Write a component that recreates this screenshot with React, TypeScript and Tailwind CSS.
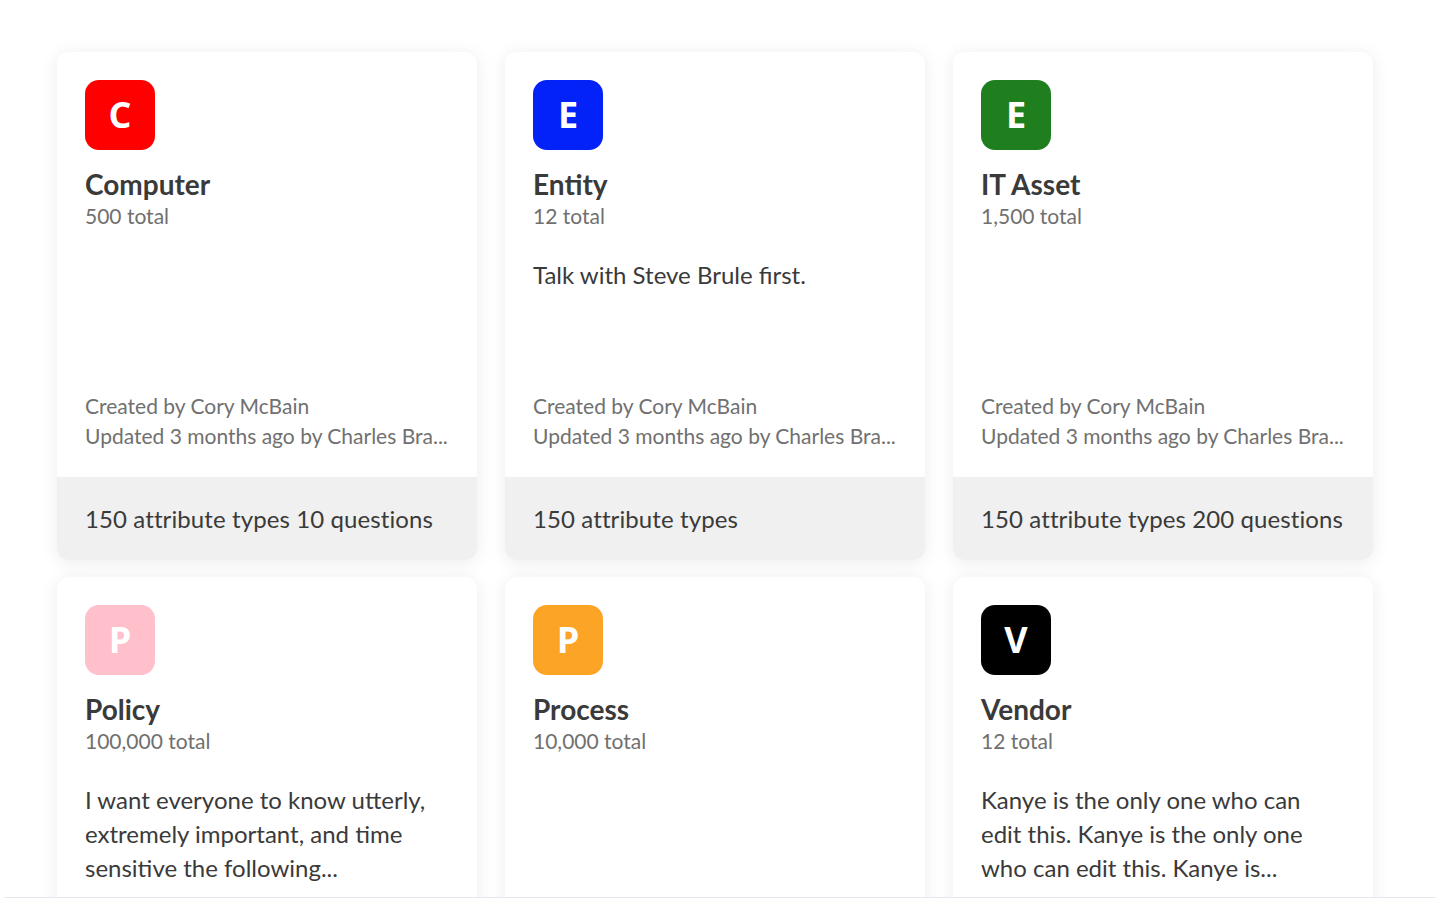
import React from "react";

type Card = {
  letter: string;
  color: string;
  title: string;
  total: string;
  desc?: string;
  footer: string;
};

const cards: Card[] = [
  { letter: "C", color: "bg-[#ff0000]", title: "Computer", total: "500 total", footer: "150 attribute types 10 questions" },
  { letter: "E", color: "bg-[#0322f8]", title: "Entity", total: "12 total", desc: "Talk with Steve Brule first.", footer: "150 attribute types" },
  { letter: "E", color: "bg-[#1f7f1f]", title: "IT Asset", total: "1,500 total", footer: "150 attribute types 200 questions" },
  { letter: "P", color: "bg-[#ffc0cb]", title: "Policy", total: "100,000 total", desc: "I want everyone to know utterly, extremely important, and time sensitive the following...", footer: "150 attribute types" },
  { letter: "P", color: "bg-[#fca426]", title: "Process", total: "10,000 total", footer: "150 attribute types" },
  { letter: "V", color: "bg-[#000000]", title: "Vendor", total: "12 total", desc: "Kanye is the only one who can edit this. Kanye is the only one who can edit this. Kanye is...", footer: "150 attribute types" },
];

function CardView({ c }: { c: Card }) {
  return (
    <div className="rounded-[12px] bg-white shadow-[0_2px_18px_rgba(0,0,0,0.08)] overflow-hidden flex flex-col">
      <div className="min-h-[425px] flex flex-col px-[28px] pt-[28px] pb-[26px]">
        <div
          className={`w-[70px] h-[70px] rounded-[14px] ${c.color} flex items-center justify-center text-white text-[36px] font-bold leading-none`}
          style={{ fontFamily: "'Open Sans', sans-serif" }}
        >
          {c.letter}
        </div>
        <div className="mt-[16px] text-[28px] leading-[36px] font-bold text-[#3a3a3a]">{c.title}</div>
        <div className="text-[21px] leading-[28px] text-[#707070]">{c.total}</div>
        <div className="flex-1">
          {c.desc && (
            <div className="mt-[28px] text-[24px] leading-[34px] text-[#3a3a3a]">{c.desc}</div>
          )}
        </div>
        <div className="text-[21px] leading-[30px] text-[#707070] whitespace-nowrap">
          <div>Created by Cory McBain</div>
          <div>Updated 3 months ago by Charles Bra...</div>
        </div>
      </div>
      <div className="bg-[#f0f0f0] h-[83px] flex items-center px-[28px] text-[24px] tracking-[0.1px] text-[#3a3a3a]">
        {c.footer}
      </div>
    </div>
  );
}

export default function App() {
  return (
    <div className="h-[900px] overflow-hidden bg-white" style={{ fontFamily: "Lato, 'Open Sans', sans-serif" }}>
      <div className="relative h-[898px] overflow-hidden border-b border-[#e6e6ee] mx-[4px]">
        <div className="grid grid-cols-[420px_420px_420px] gap-x-[28px] gap-y-[17px] pl-[53px] pt-[52px]">
          {cards.map((c, i) => (
            <CardView key={i} c={c} />
          ))}
        </div>
      </div>
    </div>
  );
}
